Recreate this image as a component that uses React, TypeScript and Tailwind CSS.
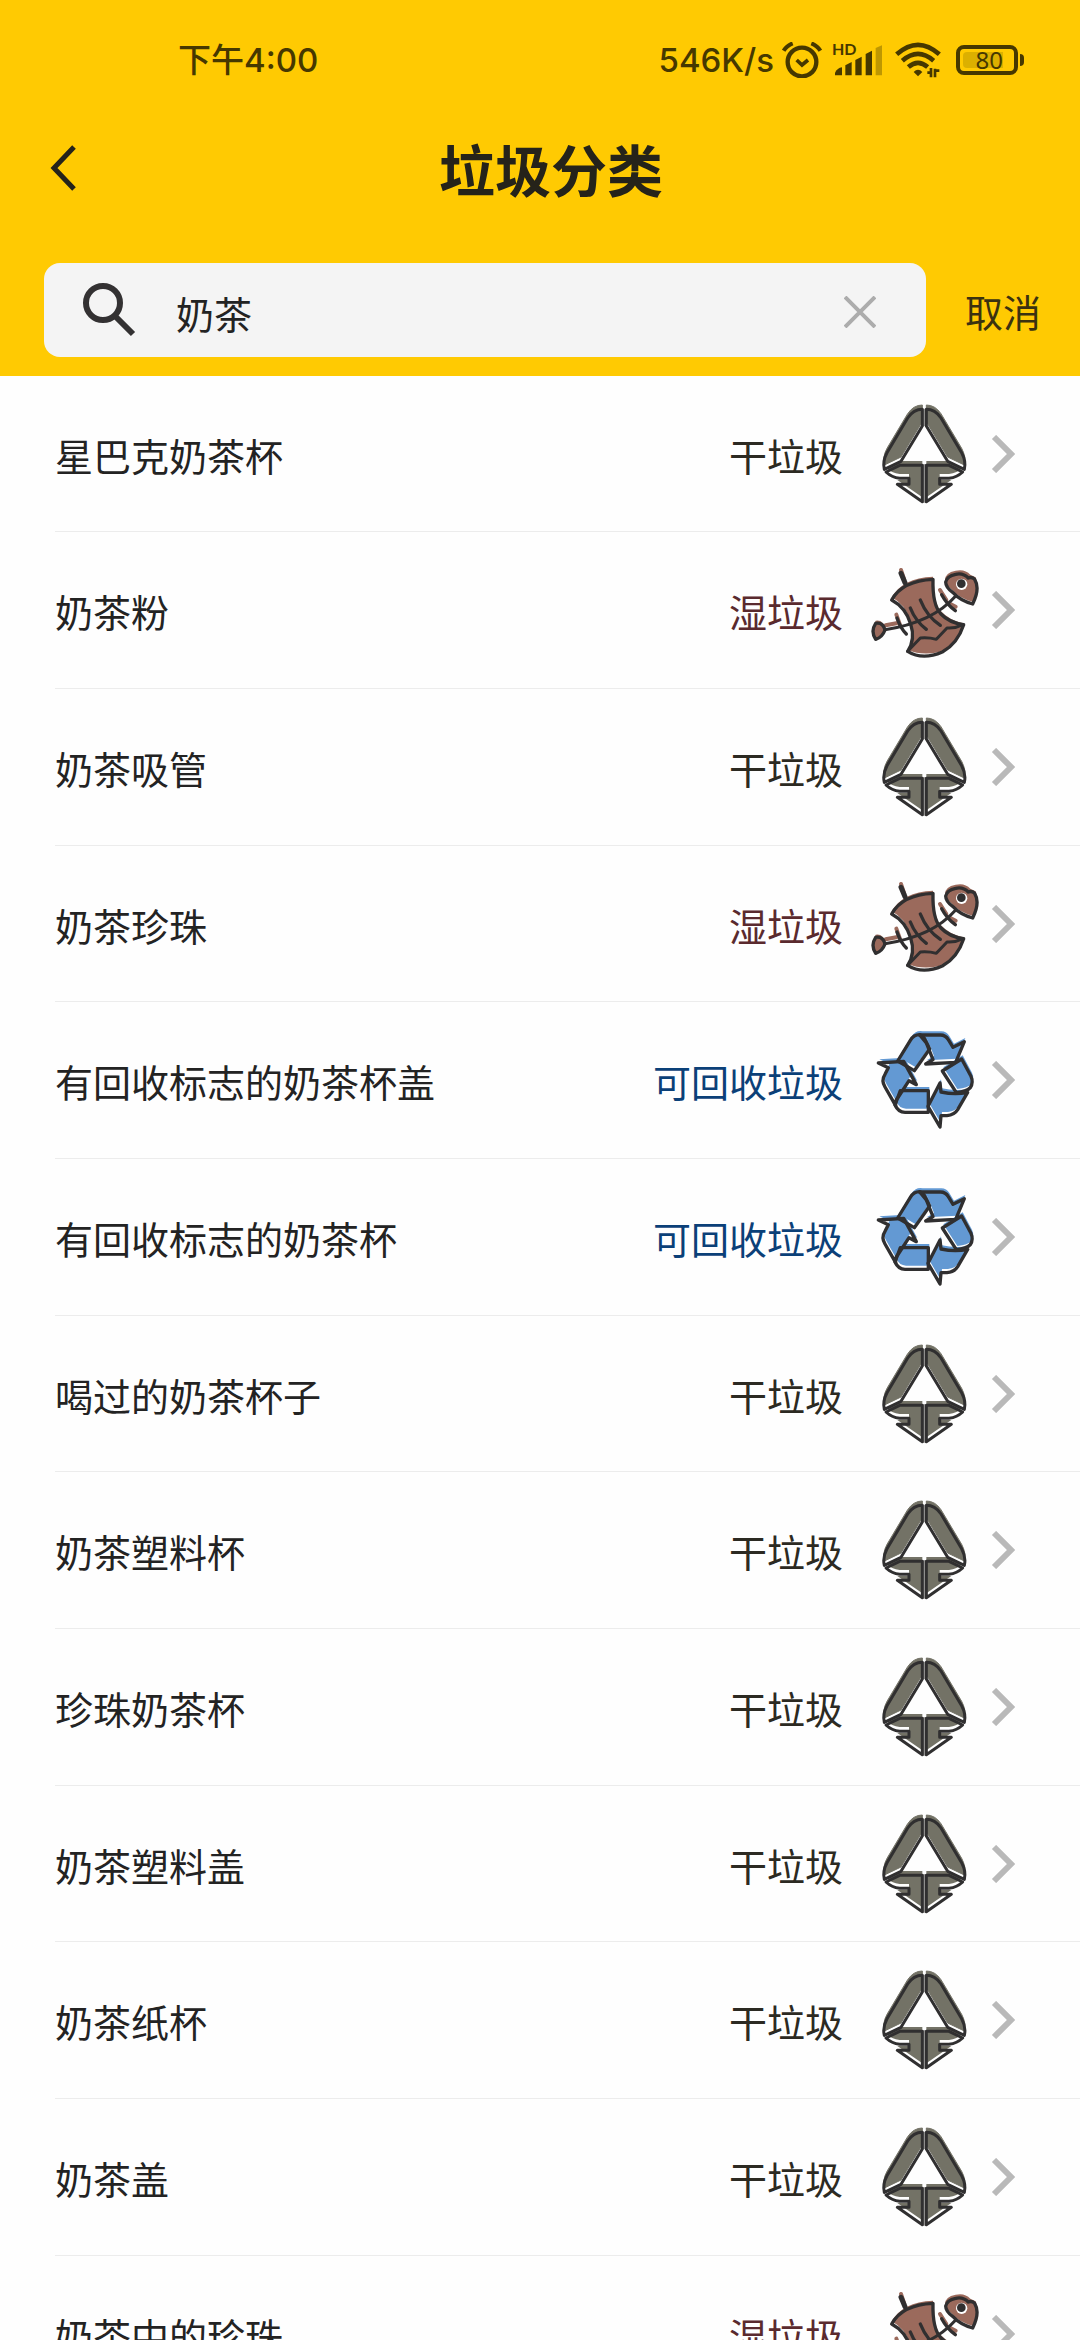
import React, { useState } from 'react';

type Category = 'dry' | 'wet' | 'recyclable';

interface GarbageItem {
  name: string;
  category: Category;
}

const INK = '#302f30';

const items: GarbageItem[] = [
  { name: '星巴克奶茶杯', category: 'dry' },
  { name: '奶茶粉', category: 'wet' },
  { name: '奶茶吸管', category: 'dry' },
  { name: '奶茶珍珠', category: 'wet' },
  { name: '有回收标志的奶茶杯盖', category: 'recyclable' },
  { name: '有回收标志的奶茶杯', category: 'recyclable' },
  { name: '喝过的奶茶杯子', category: 'dry' },
  { name: '奶茶塑料杯', category: 'dry' },
  { name: '珍珠奶茶杯', category: 'dry' },
  { name: '奶茶塑料盖', category: 'dry' },
  { name: '奶茶纸杯', category: 'dry' },
  { name: '奶茶盖', category: 'dry' },
  { name: '奶茶中的珍珠', category: 'wet' },
];

const DRY_SHAPES = [
  'M190 58V108L126 214L76 238Q70 214 84 188L146 84Q164 58 190 58Z',
  'M190 226V335L115 283H150V265H122Q98 262 81 246L122 226Z',
];

function DryHalf() {
  return (
    <>
      <g fill="#737266" transform="translate(0 -13)">
        <path d={DRY_SHAPES[0]} stroke="#737266" strokeWidth="3" />
        <path d={DRY_SHAPES[1]} />
      </g>
      <g fill="none" stroke={INK} strokeWidth="9" strokeLinejoin="round">
        {DRY_SHAPES.map((d) => (
          <path key={d} d={d} />
        ))}
      </g>
    </>
  );
}

function DryIcon() {
  return (
    <svg className="size-28" viewBox="30 24 336 336" aria-hidden="true">
      <path d="M196 56V108M196 222V338" stroke="#a3a2a0" strokeWidth="7" />
      <DryHalf />
      <g transform="translate(392 0) scale(-1 1)">
        <DryHalf />
      </g>
    </svg>
  );
}

function WetIcon() {
  return (
    <svg className="size-28" viewBox="30 12 336 336" aria-hidden="true">
      {/* заливка чуть смещена вверх относительно контура */}
      <g fill="#9b6a5c" transform="translate(0 -8)">
        <path d="M98 150Q130 92 222 88Q220 165 246 192Q270 218 312 228Q296 300 240 314Q190 326 146 308Q170 268 155 222Q140 172 98 150Z" />
        <path d="M258 98Q258 76 290 70Q318 64 334 82L350 90Q362 122 342 164Q300 152 280 128Q258 112 258 98Z" />
        <path d="M50 220Q74 216 78 246Q70 268 50 274Q34 248 50 220Z" />
      </g>
      <g fill="none" stroke="#9b6a5c" strokeWidth="12" strokeLinecap="round">
        <path d="M126 60L136 90M80 226L112 220M112 194L124 228M243 120L262 150M270 160L290 170" />
      </g>
      <g fill="none" stroke={INK} strokeWidth="10" strokeLinecap="round" strokeLinejoin="round">
        <path d="M98 150Q130 92 222 88Q220 165 246 192Q270 218 314 224Q296 280 250 306Q190 332 146 304Q170 268 155 222Q140 172 98 150Z" />
        <path d="M146 304L184 264Q210 262 232 268L264 234Q288 236 312 224" strokeWidth="9" />
        <path d="M260 96Q264 78 290 73Q312 68 328 84Q338 80 347 88Q364 116 341 162Q304 152 282 128Q260 112 260 96Z" />
        <path d="M50 220Q72 216 78 240Q70 262 50 268Q34 244 50 220Z" />
        <path d="M78 239Q220 218 290 138" strokeWidth="9" />
        <path d="M126 70L138 98" strokeWidth="15" />
        <path d="M114 204Q124 234 142 252M154 174Q170 214 202 238M184 150Q204 200 244 226M248 134Q264 164 289 182" />
      </g>
      <circle cx="308" cy="103" r="17" fill="#fff" />
      <circle cx="307" cy="101" r="13" fill={INK} />
    </svg>
  );
}

const RECYCLE_SHAPES = [
  'M116 154L154 92Q164 75 182 75Q192 78 196 86L212 118L166 183Z',
  'M182 76H244Q260 76 268 90L282 113L316 96L290 158L200 163L222 150L202 100Z',
  'M250 184L308 148L336 200Q344 218 334 234Q324 246 292 249Z',
  'M243 220L207 290L243 352L246 318H264Q286 316 296 300L326 248Q288 256 246 247Z',
  'M124 243H208V308H138Q118 308 108 286Z',
  'M58 160L134 155L172 225L150 213L118 262Q108 272 110 288L78 232Q66 212 78 194L88 174Z',
];

function RecyclableIcon() {
  return (
    <svg className="size-28" viewBox="30 43 336 336" aria-hidden="true">
      <g fill="#6399d3" transform="translate(3 -11)">
        {RECYCLE_SHAPES.map((d) => (
          <path key={d} d={d} />
        ))}
      </g>
      <g fill="none" stroke={INK} strokeWidth="10" strokeLinejoin="round">
        {RECYCLE_SHAPES.map((d) => (
          <path key={d} d={d} />
        ))}
      </g>
    </svg>
  );
}

const categories: Record<Category, { label: string; color: string; icon: React.ReactNode }> = {
  dry: { label: '干垃圾', color: 'text-[#2c2a22]', icon: <DryIcon /> },
  wet: { label: '湿垃圾', color: 'text-[#5a2a2e]', icon: <WetIcon /> },
  recyclable: { label: '可回收垃圾', color: 'text-[#0b4078]', icon: <RecyclableIcon /> },
};

function StatusBar() {
  return (
    <div className="flex h-[120px] items-center justify-between pl-[178px] pr-14 font-['Inter','Noto_Sans_CJK_SC',sans-serif] text-[#463800]">
      <span className="text-[33px] leading-10 font-medium">下午4:00</span>
      <div className="flex items-center">
        <span className="mr-2 text-[33px] leading-10 font-medium">546K/s</span>
        {/* будильник */}
        <svg className="mr-[10px] h-9 w-10" viewBox="0 0 120 108" fill="none" stroke="currentColor" aria-hidden="true">
          <circle cx="60" cy="60" r="43" strokeWidth="13" />
          <path d="M44 54L60 69L78 54" strokeWidth="11" />
          <path d="M5 26Q14 11 32 4M88 4Q106 11 115 26" strokeWidth="12" />
        </svg>
        {/* сигнал */}
        <svg className="mr-3 h-9 w-[51px]" viewBox="0 0 153 108" fill="currentColor" aria-hidden="true">
          <text x="0" y="40" fontSize="48" fontWeight="700" fontFamily="Lato, sans-serif">HD</text>
          <path d="M9 100V92Q16 78 30 76V100Z" />
          <path d="M40 100V70L59 60V100Z" />
          <path d="M70 100V54L89 44V100Z" />
          <path d="M101 100V36L120 26V100Z" />
          <path d="M131 100V18L150 10V100Z" opacity="0.35" />
        </svg>
        {/* wifi */}
        <svg className="mr-[15px] h-9 w-[46px]" viewBox="0 0 138 108" fill="none" stroke="currentColor" aria-hidden="true">
          <path d="M5 37Q69 -20 133 37" strokeWidth="14" />
          <path d="M22 56Q69 15 116 56" strokeWidth="14" />
          <path d="M40 75Q69 50 98 75" strokeWidth="14" />
          <path d="M56 90Q69 76 82 90L69 103Z" fill="currentColor" stroke="none" />
          <path d="M97 92L108 92M108 78V106M120 106V80M120 86H133" strokeWidth="8" />
        </svg>
        {/* батарея */}
        <div className="flex items-center">
          <div className="flex h-[30px] w-[62px] rounded-lg border-4 border-current p-[3px]">
            <div className="flex w-10 items-center justify-end rounded-l-sm bg-[#dcb000]">
              <span className="font-['Noto_Sans',sans-serif] text-2xl leading-6 font-normal">80</span>
            </div>
          </div>
          <div className="ml-[2px] h-3 w-1 rounded-r-sm bg-current" />
        </div>
      </div>
    </div>
  );
}

export default function App() {
  const [query, setQuery] = useState('奶茶');

  return (
    <div className="min-h-screen bg-[#fefefe] font-['Noto_Sans','Noto_Sans_CJK_SC',sans-serif] text-[#232323]">
      <header className="bg-[#ffca02] pb-[19px]">
        <StatusBar />

        <div className="flex h-24 items-center pl-11">
          <button type="button" aria-label="返回" className="flex w-10 justify-center">
            <svg className="h-12 w-7" viewBox="0 0 28 48" fill="none" stroke="#25231a" strokeWidth="5" aria-hidden="true">
              <path d="M24 3L4 24L24 45" />
            </svg>
          </button>
          <h1 className="flex-1 pt-1 pr-[62px] text-center text-[56px] leading-[72px] font-bold text-[#25231a]">垃圾分类</h1>
        </div>

        <form className="mt-[47px] flex items-center pl-11" onSubmit={(e) => e.preventDefault()}>
          <div className="flex h-[94px] min-w-0 flex-1 items-center rounded-2xl bg-[#f4f4f4] px-[38px]">
            <svg className="size-14 shrink-0" viewBox="0 0 56 56" fill="none" stroke="#333132" aria-hidden="true">
              <circle cx="21" cy="21" r="17" strokeWidth="6" />
              <path d="M34 35L51 52" strokeWidth="6" />
            </svg>
            <input
              type="text"
              value={query}
              onChange={(e) => setQuery(e.target.value)}
              aria-label="搜索垃圾"
              className="ml-[38px] h-full min-w-0 flex-1 bg-transparent pt-1 text-[38px] outline-none"
            />
            <button type="button" aria-label="清除" className="px-3 pt-1" onClick={() => setQuery('')}>
              <svg className="size-8" viewBox="0 0 32 32" stroke="#acacac" strokeWidth="4" aria-hidden="true">
                <path d="M1 1L31 31M31 1L1 31" />
              </svg>
            </button>
          </div>
          <button type="button" className="w-[154px] pt-1 text-[38px] leading-[56px] text-[#3b3210]">取消</button>
        </form>
      </header>

      <ul>
        {items.map((item) => {
          const category = categories[item.category];
          return (
            <li key={item.name} className="h-[157px] pl-[55px] nth-[3n+1]:h-[156px]">
              <a href="#" className="flex h-full items-center border-b border-[#ececec] pr-[65px]">
                <span className="flex-1 pt-1 text-[38px] leading-[56px]">{item.name}</span>
                <span className={`pt-1 text-[38px] leading-[56px] ${category.color}`}>{category.label}</span>
                <span className="ml-[26px]">{category.icon}</span>
                <svg className="ml-[10px] h-[38px] w-6" viewBox="0 0 24 38" fill="none" stroke="#b9b9b9" strokeWidth="6" aria-hidden="true">
                  <path d="M3 2L20 19L3 36" />
                </svg>
              </a>
            </li>
          );
        })}
      </ul>
    </div>
  );
}
